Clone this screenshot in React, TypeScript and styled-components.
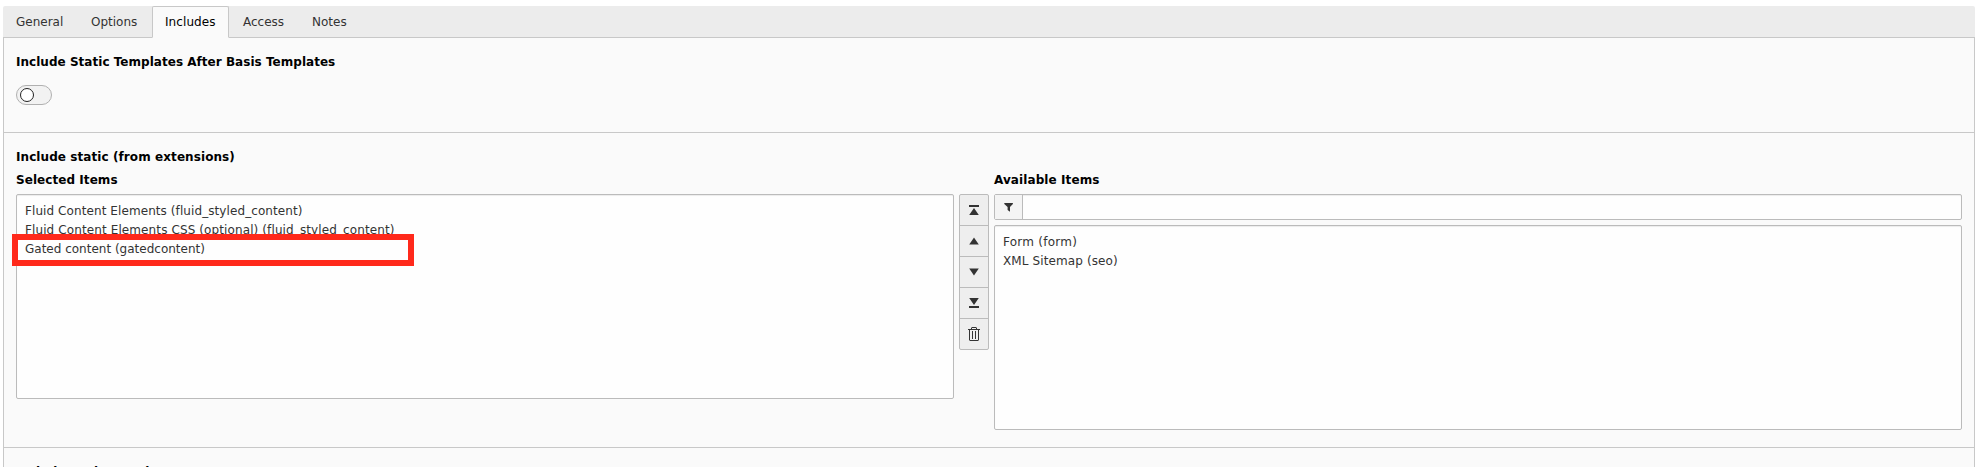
import React from 'react';
import styled, { createGlobalStyle } from 'styled-components';

const GlobalStyle = createGlobalStyle`
  * { box-sizing: border-box; }
  body {
    margin: 0;
    background: #fff;
    font: 12px/18px Verdana, "DejaVu Sans", sans-serif;
    color: #333;
    overflow: hidden;
  }
`;

const Page = styled.main`
  height: 467px;
  padding: 6px 1px 0 3px;
  overflow: hidden;
`;

const TabBar = styled.nav`
  display: flex;
  height: 32px;
  background: #ececec;
  border-bottom: 1px solid #c8c8c8;
  border-radius: 2px 2px 0 0;
`;

const Tab = styled.a<{ $active?: boolean; $width: number; $indent?: number; $spacing?: number }>`
  width: ${p => p.$width}px;
  height: 32px;
  padding: 6px 0 0 ${p => p.$indent ?? 12}px;
  white-space: nowrap;
  letter-spacing: ${p => p.$spacing ?? 0}px;
  border: 1px solid ${p => (p.$active ? '#c8c8c8' : 'transparent')};
  border-bottom-color: ${p => (p.$active ? '#fafafa' : 'transparent')};
  border-radius: 2px 2px 0 0;
  background: ${p => (p.$active ? '#fafafa' : 'transparent')};
  color: ${p => (p.$active ? '#000' : '#333')};
`;

const Panel = styled.div`
  border: solid #c8c8c8;
  border-width: 0 1px;
  background: #fafafa;
`;

const Section = styled.section<{ $height: number }>`
  height: ${p => p.$height}px;
  padding: 15px 12px 0;
  border-bottom: 1px solid #c8c8c8;
`;

const Label = styled.div<{ $spacing?: number }>`
  height: 18px;
  font-weight: 700;
  color: #000;
  white-space: nowrap;
  letter-spacing: ${p => p.$spacing ?? 0}px;
`;

const Toggle = styled.div`
  display: flex;
  align-items: center;
  width: 36px;
  height: 20px;
  margin-top: 14px;
  padding-left: 3px;
  border: 1px solid #b0b0b0;
  border-radius: 10px;
  background: #f2f2f2;
`;

const Knob = styled.span`
  width: 14px;
  height: 14px;
  border: 1px solid #222;
  border-radius: 50%;
  background: #fff;
`;

const Picker = styled.div`
  display: flex;
  align-items: flex-start;
`;

const Column = styled.div<{ $width: number }>`
  width: ${p => p.$width}px;
  padding-top: 5px;
`;

const List = styled.div`
  position: relative;
  height: 205px;
  margin-top: 5px;
  padding: 7px 8px;
  border: 1px solid #bbb;
  border-radius: 2px;
  background: #fefefe;
  box-shadow: inset 0 1px 1px rgba(0, 0, 0, 0.075);
`;

const Option = styled.div<{ $spacing?: number }>`
  height: 19px;
  line-height: 19px;
  white-space: nowrap;
  letter-spacing: ${p => p.$spacing ?? 0}px;
`;

const Highlight = styled.span`
  position: absolute;
  left: -5px;
  top: 39px;
  width: 402px;
  height: 32px;
  border: 6px solid #ff291b;
`;

const Controls = styled.div`
  display: flex;
  flex-direction: column;
  width: 30px;
  height: 156px;
  margin: 28px 5px 0;
  border: 1px solid #bbb;
  border-radius: 2px;
  background: #eee;
`;

const Control = styled.button`
  display: flex;
  align-items: center;
  justify-content: center;
  flex: none;
  height: 30px;
  padding: 0;
  border: 0;
  background: none;
  & + & {
    height: 31px;
    border-top: 1px solid #bbb;
  }
`;

const Filter = styled.div`
  display: flex;
  height: 26px;
  margin-top: 5px;
  border: 1px solid #bbb;
  border-radius: 2px;
  background: #fefefe;
  box-shadow: inset 0 1px 1px rgba(0, 0, 0, 0.075);
`;

const FilterIcon = styled.span`
  display: flex;
  align-items: center;
  justify-content: center;
  width: 28px;
  border-right: 1px solid #bbb;
  background: #f4f4f4;
`;

const controls = [
  { name: 'top', icon: <path d="M3 3h10v2H3zM8 6l4.8 7H3.2z" /> },
  { name: 'up', icon: <path d="M8 4.5l4.8 7H3.2z" /> },
  { name: 'down', icon: <path d="M8 11.5l4.8-7H3.2z" /> },
  { name: 'bottom', icon: <path d="M8 10L3.2 3h9.6zM3 11h10v2H3z" /> },
  {
    name: 'delete',
    icon: (
      <path
        fillRule="evenodd"
        d="M6 1h4l1 1v1h3v1h-1v10l-1 1H4l-1-1V4H2V3h3V2zm0 1v1h4V2zM4 4v10h8V4zM6 5h1v8H6zM9 5h1v8H9z"
      />
    ),
  },
];

export default function App() {
  return (
    <>
      <GlobalStyle />
      <Page>
        <TabBar>
          <Tab $width={75}>General</Tab>
          <Tab $width={74}>Options</Tab>
          <Tab $width={77} $active $spacing={0.08}>Includes</Tab>
          <Tab $width={69} $indent={13}>Access</Tab>
          <Tab $width={60} $indent={13}>Notes</Tab>
        </TabBar>
        <Panel>
          <Section $height={95}>
            <Label $spacing={0.03}>Include Static Templates After Basis Templates</Label>
            <Toggle><Knob /></Toggle>
          </Section>
          <Section $height={315}>
            <Label $spacing={0.08}>Include static (from extensions)</Label>
            <Picker>
              <Column $width={938}>
                <Label $spacing={0.06}>Selected Items</Label>
                <List>
                  <Option $spacing={0.085}>Fluid Content Elements (fluid_styled_content)</Option>
                  <Option $spacing={0.11}>Fluid Content Elements CSS (optional) (fluid_styled_content)</Option>
                  <Option>Gated content (gatedcontent)</Option>
                  <Highlight />
                </List>
              </Column>
              <Controls>
                {controls.map(({ name, icon }) => (
                  <Control key={name}>
                    <svg width="16" height="16" viewBox="0 0 16 16" fill="#333">{icon}</svg>
                  </Control>
                ))}
              </Controls>
              <Column $width={968}>
                <Label $spacing={0.09}>Available Items</Label>
                <Filter>
                  <FilterIcon>
                    <svg width="12" height="12" viewBox="0 0 12 12" fill="#333">
                      <path d="M1.3 2h8.6v1L7 6v4.7L4.6 9V6L1.3 3z" />
                    </svg>
                  </FilterIcon>
                </Filter>
                <List>
                  <Option $spacing={0.25}>Form (form)</Option>
                  <Option $spacing={0.11}>XML Sitemap (seo)</Option>
                </List>
              </Column>
            </Picker>
          </Section>
          <Section $height={60}>
            <Label>Include Basis Template</Label>
          </Section>
        </Panel>
      </Page>
    </>
  );
}
